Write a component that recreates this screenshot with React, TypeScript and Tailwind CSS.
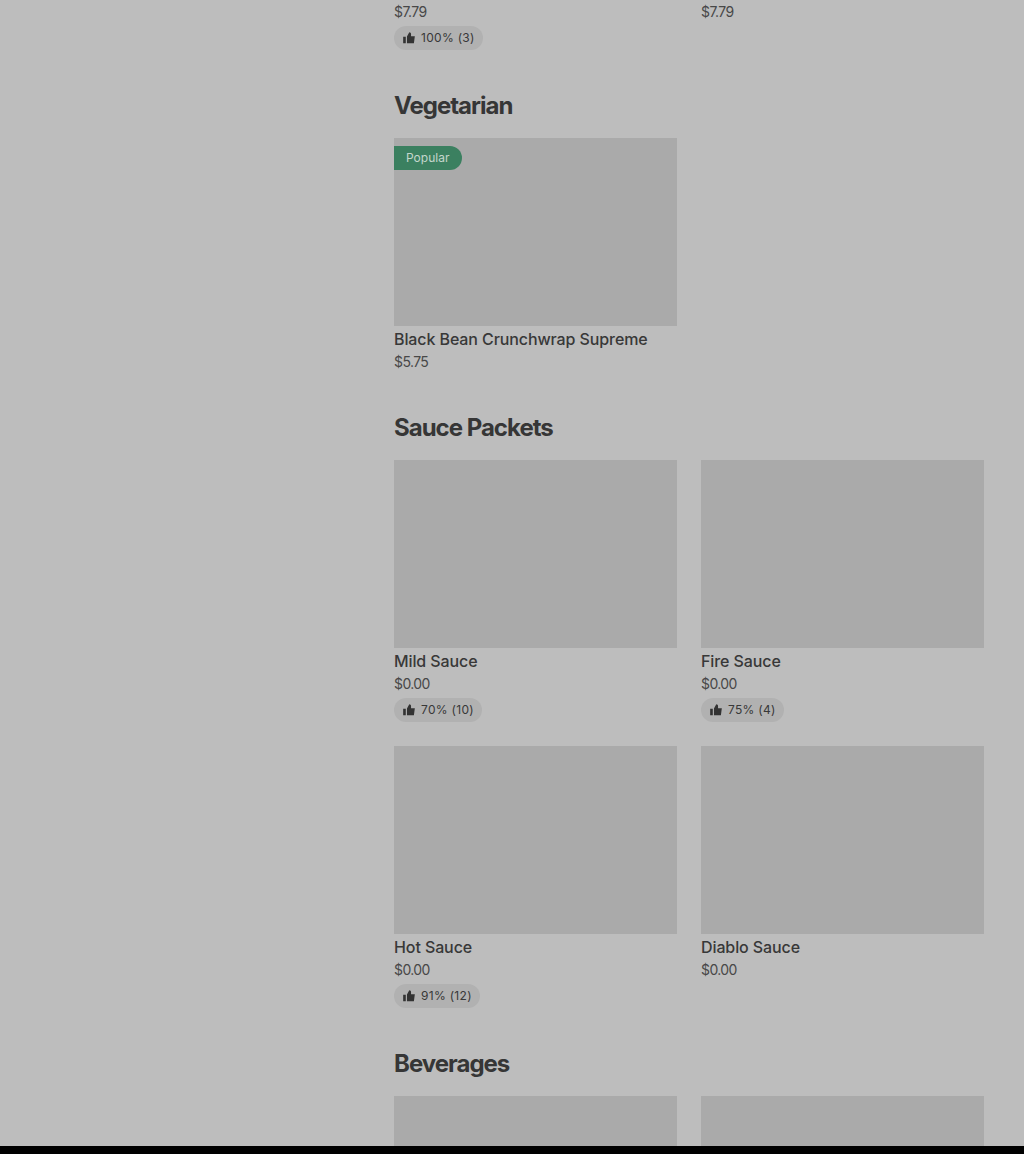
const Thumb = () => (
  <svg viewBox="0 0 24 24" className="w-3.5 h-3.5 shrink-0" fill="#333333">
    <path d="M2 10h4.5v11H2zM8.5 21V9.5L12.5 2c1.8 0 3 1.3 3 3v4H22l-1.6 12z" />
  </svg>
);

type Item = { name: string; price: string; rating?: string; popular?: boolean };

function Card({ item }: { item: Item }) {
  return (
    <div className="flex flex-col items-start">
      <div className="w-full h-[188px] bg-[#aaaaaa]">
        {item.popular && (
          <div className="mt-2 w-fit h-6 pl-3 pr-[13px] flex items-center rounded-r-full bg-[#3b8060] text-[12px] text-[#c4d6cc]">
            Popular
          </div>
        )}
      </div>
      <div className="mt-[3px] text-[16px] leading-5 font-medium tracking-[-0.1px] text-[#383838]">{item.name}</div>
      <div className="mt-[3px] text-[14px] leading-5 tracking-[-0.6px] text-[#484848]">{item.price}</div>
      {item.rating && (
        <div className="mt-1 h-6 pl-2 pr-2 flex items-center gap-[5px] rounded-full bg-[#b1b1b1] text-[12px] tracking-[0.3px] text-[#383838]">
          <Thumb />
          {item.rating}
        </div>
      )}
    </div>
  );
}

function Section({ title, items }: { title: string; items: Item[] }) {
  return (
    <section>
      <h2 className="mt-10 mb-4 text-[24px] leading-8 font-bold tracking-[-1px] text-[#363636]">{title}</h2>
      <div className="grid grid-cols-2 gap-6">
        {items.map((item) => (
          <Card key={item.name} item={item} />
        ))}
      </div>
    </section>
  );
}

export default function App() {
  return (
    <div className="h-[1154px] flex flex-col overflow-hidden bg-black font-['Inter',sans-serif]">
      <div className="h-[1146px] overflow-hidden bg-[#bdbdbd] pl-[394px] pr-10">
        <div className="-mt-[212px]">
          <div className="grid grid-cols-2 gap-6">
            <Card item={{ name: "Cheesy Gordita Crunch", price: "$7.79", rating: "100% (3)" }} />
            <Card item={{ name: "Nachos BellGrande Combo", price: "$7.79" }} />
          </div>
          <Section title="Vegetarian" items={[{ name: "Black Bean Crunchwrap Supreme", price: "$5.75", popular: true }]} />
          <Section
            title="Sauce Packets"
            items={[
              { name: "Mild Sauce", price: "$0.00", rating: "70% (10)" },
              { name: "Fire Sauce", price: "$0.00", rating: "75% (4)" },
              { name: "Hot Sauce", price: "$0.00", rating: "91% (12)" },
              { name: "Diablo Sauce", price: "$0.00" },
            ]}
          />
          <Section
            title="Beverages"
            items={[
              { name: "Pepsi", price: "$2.99" },
              { name: "Mountain Dew", price: "$2.99" },
            ]}
          />
        </div>
      </div>
    </div>
  );
}
